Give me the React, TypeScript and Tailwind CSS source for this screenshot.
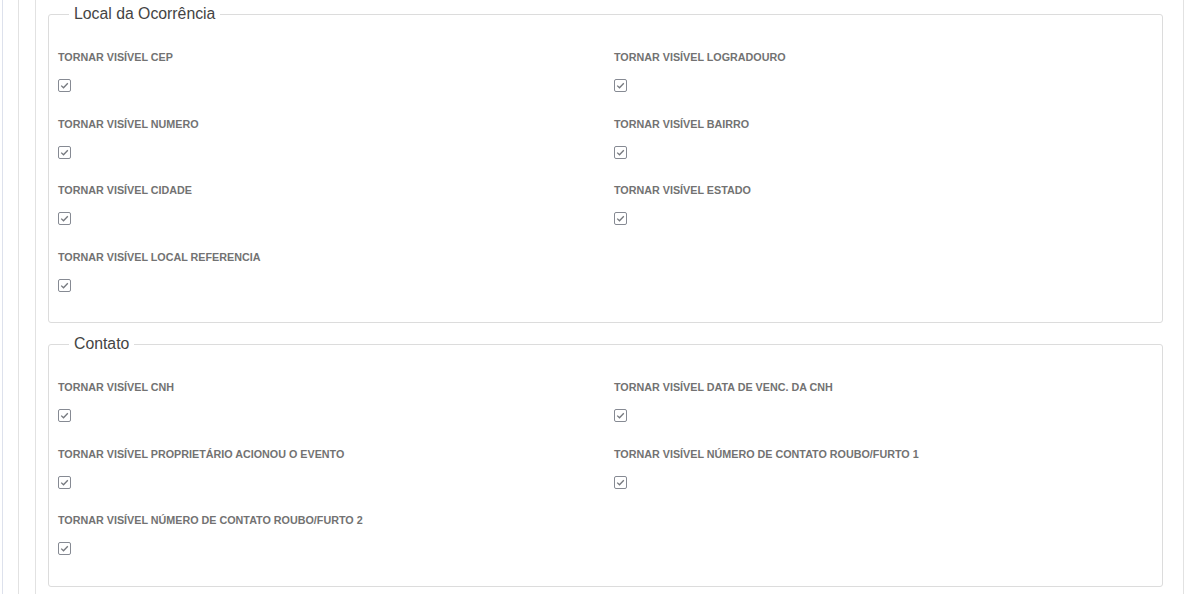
const local = [
  "TORNAR VISÍVEL CEP",
  "TORNAR VISÍVEL LOGRADOURO",
  "TORNAR VISÍVEL NUMERO",
  "TORNAR VISÍVEL BAIRRO",
  "TORNAR VISÍVEL CIDADE",
  "TORNAR VISÍVEL ESTADO",
  "TORNAR VISÍVEL LOCAL REFERENCIA",
];

const contato = [
  "TORNAR VISÍVEL CNH",
  "TORNAR VISÍVEL DATA DE VENC. DA CNH",
  "TORNAR VISÍVEL PROPRIETÁRIO ACIONOU O EVENTO",
  "TORNAR VISÍVEL NÚMERO DE CONTATO ROUBO/FURTO 1",
  "TORNAR VISÍVEL NÚMERO DE CONTATO ROUBO/FURTO 2",
];

function Check() {
  return (
    <span className="flex h-[13px] w-[13px] items-center justify-center rounded-[2px] border border-[#868a93] bg-white">
      <svg width="9" height="9" viewBox="0 0 9 9" fill="none">
        <path d="M1.2 4.6 L3.5 6.8 L7.8 2.2" stroke="#75787e" strokeWidth="1.3" />
      </svg>
    </span>
  );
}

function Section({ title, items, className }: { title: string; items: string[]; className?: string }) {
  return (
    <fieldset className={"w-[1115px] rounded-[3px] border border-[#dcdcdc] pl-[20px] pb-[6px] " + (className ?? "")}>
      <legend className="px-[5px] text-[15.8px] leading-[20px] text-[#444]">{title}</legend>
      <div className="-ml-[11px] grid grid-cols-[556px_1fr] pt-[26px]">
        {items.map((t) => (
          <div key={t} className="flex h-[66.5px] flex-col items-start">
            <div className="text-[10.75px] font-bold leading-[14px] text-[#727272]">{t}</div>
            <div className="mt-[15px]">
              <Check />
            </div>
          </div>
        ))}
      </div>
    </fieldset>
  );
}

export default function App() {
  return (
    <div className="h-[594px] overflow-hidden bg-white pl-[2px] font-['Liberation_Sans',Arial,sans-serif]">
      <div className="h-full border-l border-[#dde1ec] pl-[15px]">
        <div className="h-full w-[1166px] border-x border-[#e2e2e2] pl-[16px]">
          <div className="h-full border-l border-[#e2e2e2] pl-[12px] pt-[4px]">
            <Section title="Local da Ocorrência" items={local} />
            <Section title="Contato" items={contato} className="mt-[11px]" />
          </div>
        </div>
      </div>
    </div>
  );
}
